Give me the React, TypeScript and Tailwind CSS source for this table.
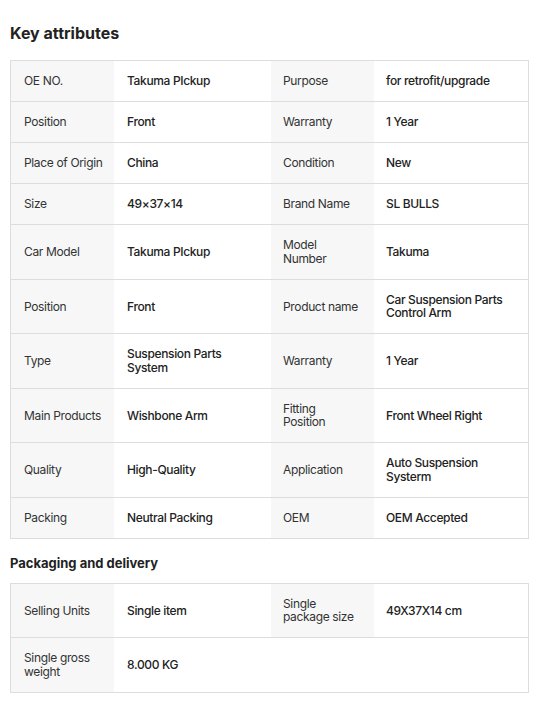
type Attr = [string, string, string, string]

const keyAttributes: Attr[] = [
  ['OE NO.', 'Takuma PIckup', 'Purpose', 'for retrofit/upgrade'],
  ['Position', 'Front', 'Warranty', '1 Year'],
  ['Place of Origin', 'China', 'Condition', 'New'],
  ['Size', '49×37×14', 'Brand Name', 'SL BULLS'],
  ['Car Model', 'Takuma PIckup', 'Model\nNumber', 'Takuma'],
  ['Position', 'Front', 'Product name', 'Car Suspension Parts\nControl Arm'],
  ['Type', 'Suspension Parts\nSystem', 'Warranty', '1 Year'],
  ['Main Products', 'Wishbone Arm', 'Fitting\nPosition', 'Front Wheel Right'],
  ['Quality', 'High-Quality', 'Application', 'Auto Suspension\nSysterm'],
  ['Packing', 'Neutral Packing', 'OEM', 'OEM Accepted'],
]

const packaging: Attr[] = [
  ['Selling Units', 'Single item', 'Single\npackage size', '49X37X14 cm'],
  ['Single gross\nweight', '8.000 KG', '', ''],
]

function AttrTable({ rows }: { rows: Attr[] }) {
  return (
    <div className="border border-[#dddddd]">
      {rows.map((row, i) => (
        <div
          key={i}
          className={`grid grid-cols-[103px_157px_103px_1fr] text-[12px] leading-[13.5px] tracking-[-0.35px] whitespace-pre-line ${
            i < rows.length - 1 ? 'border-b border-[#dddddd]' : ''
          }`}
        >
          <div className="bg-[#f7f7f7] py-[13.25px] pl-[13px] pr-[4px] text-[#333333] flex items-center">{row[0]}</div>
          <div className="py-[13.25px] pl-[13px] pr-[4px] text-[#222222] font-medium flex items-center">{row[1]}</div>
          {row[2] ? (
            <div className="bg-[#f7f7f7] py-[13.25px] pl-[12px] pr-[4px] text-[#333333] flex items-center">{row[2]}</div>
          ) : (
            <div />
          )}
          <div className="py-[13.25px] pl-[12px] pr-[4px] text-[#222222] font-medium flex items-center">{row[3]}</div>
        </div>
      ))}
    </div>
  )
}

export default function App() {
  return (
    <div className="bg-white w-[553px] min-h-[706px] px-[10px] pt-[21px] font-['Inter',sans-serif] text-[#222222]">
      <h2 className="text-[16px] leading-[24px] font-bold text-[#222222] mb-[15px]">Key attributes</h2>
      <div className="w-[519px]">
        <AttrTable rows={keyAttributes} />
      </div>
      <h3 className="text-[13px] leading-[20px] font-bold text-[#222222] mt-[14px] mb-[10px]">Packaging and delivery</h3>
      <div className="w-[519px]">
        <AttrTable rows={packaging} />
      </div>
    </div>
  )
}
